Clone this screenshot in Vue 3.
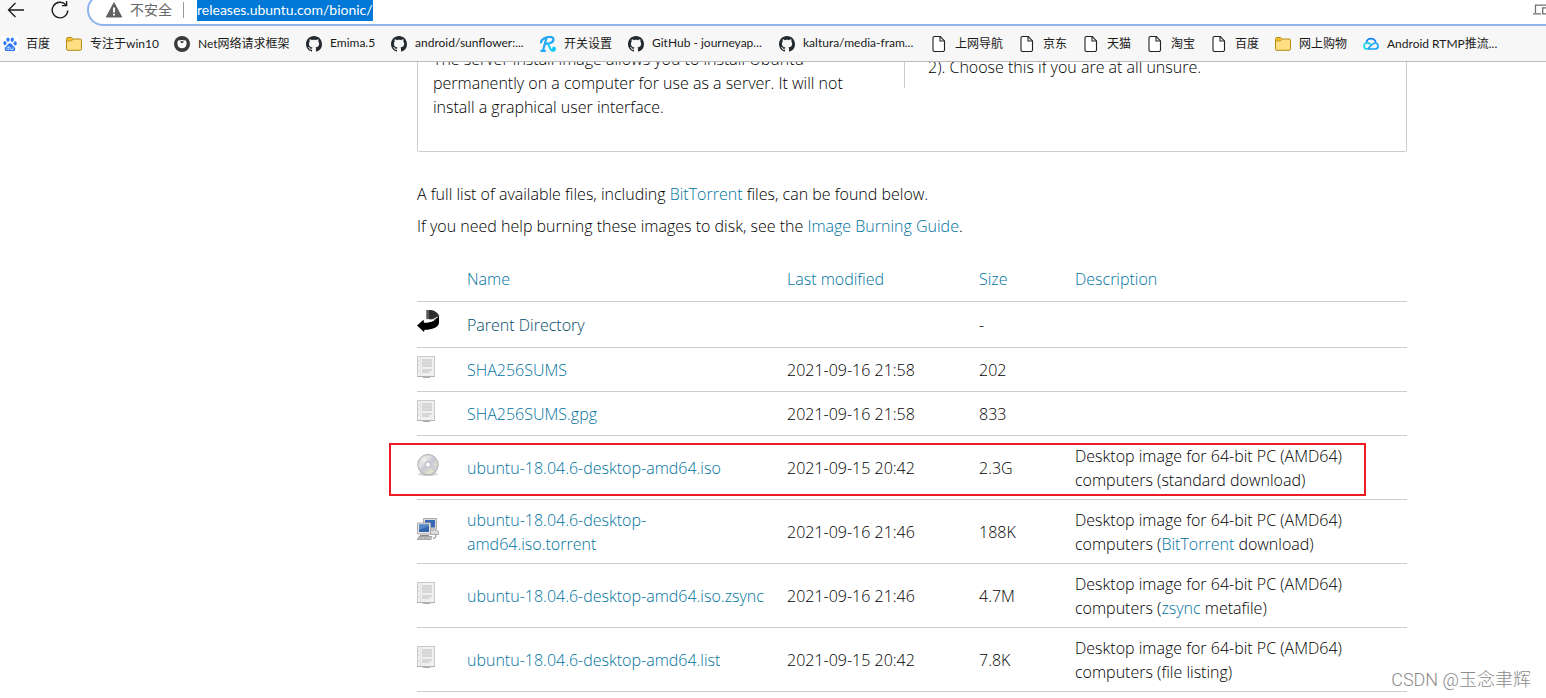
<script setup>
const bookmarks = [
  { icon: 'paw', label: '百度', width: 64 },
  { icon: 'folder', label: '专注于win10', width: 108 },
  { icon: 'face', label: 'Net网络请求框架', width: 132 },
  { icon: 'github', label: 'Emima.5', width: 85 },
  { icon: 'github', label: 'android/sunflower:...', width: 149 },
  { icon: 'letter', label: '开关设置', width: 88 },
  { icon: 'github', label: 'GitHub - journeyap...', width: 151 },
  { icon: 'github', label: 'kaltura/media-fram...', width: 152 },
  { icon: 'page', label: '上网导航', width: 88 },
  { icon: 'page', label: '京东', width: 64 },
  { icon: 'page', label: '天猫', width: 64 },
  { icon: 'page', label: '淘宝', width: 64 },
  { icon: 'page', label: '百度', width: 64 },
  { icon: 'folder', label: '网上购物', width: 88 },
  { icon: 'cloud', label: 'Android RTMP推流...', width: 160 }
]
const columns = bookmarks.map((b) => b.width + 'px').join(' ')

const image = 'Desktop image for 64-bit PC (AMD64) computers'
const files = [
  { icon: 'back', name: 'Parent Directory', date: '', size: '-', visited: true },
  { icon: 'text', name: 'SHA256SUMS', date: '2021-09-16 21:58', size: '202' },
  { icon: 'text', name: 'SHA256SUMS.gpg', date: '2021-09-16 21:58', size: '833' },
  { icon: 'disc', name: 'ubuntu-18.04.6-desktop-amd64.iso', date: '2021-09-15 20:42', size: '2.3G', before: image + ' (standard download)', marked: true },
  { icon: 'computers', name: 'ubuntu-18.04.6-desktop-amd64.iso.torrent', date: '2021-09-16 21:46', size: '188K', before: image + ' (', link: 'BitTorrent', after: ' download)' },
  { icon: 'text', name: 'ubuntu-18.04.6-desktop-amd64.iso.zsync', date: '2021-09-16 21:46', size: '4.7M', before: image + ' (', link: 'zsync', after: ' metafile)' },
  { icon: 'text', name: 'ubuntu-18.04.6-desktop-amd64.list', date: '2021-09-15 20:42', size: '7.8K', before: image + ' (file listing)' }
]
</script>

<template>
  <div class="window">
    <header class="browser">
      <div class="toolbar">
        <button class="tool back" type="button" aria-label="Back">
          <svg width="18" height="18" viewBox="0 0 18 18" fill="none" stroke="#1b1b1b" stroke-width="1.3"><path d="M17 9H1.5M8.500 2 1.500 9l7 7" /></svg>
        </button>
        <button class="tool reload" type="button" aria-label="Reload">
          <svg width="18" height="18" viewBox="0 0 18 18" fill="none" stroke="#1b1b1b" stroke-width="1.4"><path d="M16.800 9.500A7.800 7.800 0 1 1 14.800 3.800M15.600 0v4.600H11" /></svg>
        </button>
        <div class="address">
          <svg width="16" height="16" viewBox="0 0 16 16"><path d="M8 .8 15.700 15H.3Z" fill="#616161" stroke="#616161" stroke-linejoin="round" /><path d="M7 5.500h2v5H7zM7 11.800h2v1.800H7z" fill="#fff" /></svg>
          <span class="insecure">不安全</span>
          <input class="url" type="text" aria-label="Address" value="releases.ubuntu.com/bionic/" />
          <svg class="devices" width="13" height="12" viewBox="0 0 13 12" fill="none" stroke="#707070" stroke-width="1.3"><path d="M2.500 9V1.200H13M0 9.800h8M13 3.800H9.700v6H13" /></svg>
        </div>
      </div>
      <nav class="bookmarks" :style="{ gridTemplateColumns: columns }">
        <a v-for="(b, i) in bookmarks" :key="i" class="bookmark" href="#">
          <svg v-if="b.icon === 'paw'" width="16" height="16" viewBox="0 0 16 16">
            <rect width="16" height="16" fill="#fff" />
            <g fill="#2d78f4"><ellipse cx="2.9" cy="7.2" rx="1.6" ry="2.1" transform="rotate(-12 2.9 7.2)" /><ellipse cx="6" cy="3.6" rx="1.6" ry="2.2" /><ellipse cx="10.2" cy="3.7" rx="1.6" ry="2.2" transform="rotate(10 10.2 3.7)" /><ellipse cx="13.2" cy="7.4" rx="1.6" ry="2.1" /><path d="M8 7.2c1.6 0 2 1.3 3 2.5 1 1.100 2.500 1.700 2.300 3.500-.2 2-2 2.100-3.300 1.900-1.300-.2-2.700-.2-4 0-1.400.2-3.200 0-3.400-1.900-.2-1.800 1.300-2.400 2.300-3.500C6 8.500 6.400 7.200 8 7.200Z" /></g>
            <path d="M7 10v3.600H5.600c-1.300 0-1.300-2.200 0-2.200H7M8.700 11.300v2.300H11v-2.300" fill="none" stroke="#fff" stroke-width=".7" />
          </svg>
          <svg v-else-if="b.icon === 'folder'" width="16" height="16" viewBox="0 0 16 16">
            <path d="M.5 3.200Q.5 1.500 2 1.500h3.500L7.300 3h6.900q1.300 0 1.300 1.500v8.300q0 1.500-1.300 1.500H2q-1.500 0-1.500-1.500Z" fill="#ffdf82" stroke="#b58a14" />
            <path d="M1 4.500V3q0-1 1-1h3.300l1.400 1.300-1.400 1.400H1Z" fill="#f4bd2c" /><path d="M.8 5h4.700L7.300 3" fill="none" stroke="#b58a14" stroke-width=".8" />
          </svg>
          <svg v-else-if="b.icon === 'face'" width="16" height="16" viewBox="0 0 16 16">
            <circle cx="8" cy="8" r="8" fill="#3b3b3d" /><path d="M4 4.600 6.500 4.200Q8 4 9.500 4.200L12 4.600Q13 7 12.400 9 11.300 12.200 8 12.200T3.600 9Q3 7 4 4.600Z" fill="#fff" /><path d="M6.200 5.300h3.600L9 7H7Z" fill="#3b3b3d" />
          </svg>
          <svg v-else-if="b.icon === 'github'" width="16" height="16" viewBox="0 0 16 16">
            <path fill="#24292f" d="M8 0C3.580 0 0 3.580 0 8c0 3.540 2.290 6.530 5.470 7.590.4.070.55-.17.55-.38 0-.19-.01-.82-.01-1.490-2.010.37-2.530-.49-2.690-.94-.09-.23-.48-.94-.82-1.130-.28-.15-.68-.52-.01-.53.63-.01 1.080.58 1.230.82.72 1.210 1.870.87 2.330.66.07-.52.28-.87.51-1.070-1.780-.2-3.640-.89-3.640-3.950 0-.87.31-1.590.82-2.150-.08-.2-.36-1.020.08-2.120 0 0 .67-.21 2.200.82.64-.18 1.320-.27 2-.27s1.360.09 2 .27c1.530-1.040 2.200-.82 2.200-.82.44 1.100.16 1.920.08 2.120.51.56.82 1.270.82 2.150 0 3.070-1.870 3.750-3.650 3.950.29.25.54.73.54 1.480 0 1.070-.01 1.930-.01 2.200 0 .21.15.46.55.38A8.010 8.010 0 0 0 16 8c0-4.420-3.580-8-8-8Z" />
          </svg>
          <svg v-else-if="b.icon === 'letter'" width="16" height="16" viewBox="0 0 16 16" fill="none" stroke-linecap="round">
            <path d="M6.300 2.500 3 14.500M1 6.500C1 3 6 1 10 1c4.500 0 4.500 4.500.5 6-1.500.6-3 .7-4 .7M1.200 14.800H5" stroke="#23a8f5" stroke-width="2.200" /><path d="M8 8c1.500 1.500 2 6.500 4.500 6.800 2 .2 3-1.700 2.200-2.800-.8-.9-2 0-1.500.9" stroke="#12c9fa" stroke-width="2" />
          </svg>
          <svg v-else-if="b.icon === 'page'" width="16" height="16" viewBox="0 0 16 16">
            <path d="M3.500.5h5.800l4.200 4.400v9.100q0 1.500-1.500 1.500H3.500q-1.500 0-1.500-1.500V2Q2 .5 3.500.5Z" fill="#fff" stroke="#222" stroke-width="1.100" /><path d="M9 .7V5h4.300" fill="none" stroke="#222" stroke-width="1.100" />
          </svg>
          <svg v-else width="16" height="16" viewBox="0 0 16 16" fill="none" stroke-width="1.700">
            <path d="M3.300 6.800C3.800 4 5.500 2.700 8 2.700c2.700 0 4.300 1.500 4.800 4" stroke="#1684fc" /><path d="M4.300 13h7.700c4 0 4-6 .2-6-1.400 0-2.200.7-3 1.500L4.500 13" stroke="#17a2fa" /><path d="m8.200 9-1.100-1C5.900 7 5.200 6.800 4.100 6.800c-4 0-4.200 6.200.2 6.200" stroke="#19d4e6" />
          </svg>
          <span>{{ b.label }}</span>
        </a>
      </nav>
    </header>

    <main class="page">
      <section class="info">
        <p class="server">The server install image allows you to install Ubuntu permanently on a computer for use as a server. It will not install a graphical user interface.</p>
        <p class="choose">2). Choose this if you are at all unsure.</p>
      </section>
      <p class="note">A full list of available files, including <a href="#">BitTorrent</a> files, can be found below.</p>
      <p class="note">If you need help burning these images to disk, see the <a href="#">Image Burning Guide</a>.</p>

      <table class="files">
        <colgroup><col class="c-icon" /><col class="c-name" /><col class="c-date" /><col class="c-size" /><col /></colgroup>
        <thead>
          <tr>
            <th></th>
            <th><a href="#">Name</a></th>
            <th><a href="#">Last modified</a></th>
            <th><a href="#">Size</a></th>
            <th><a href="#">Description</a></th>
          </tr>
        </thead>
        <tbody>
          <tr v-for="f in files" :key="f.name" :class="{ marked: f.marked }">
            <td>
              <svg v-if="f.icon === 'back'" class="icon tall" width="22" height="22" viewBox="0 0 22 22">
                <path d="M9 0h5c4 .8 7.500 3 8 6v3C20 10 16 9.200 9 9.200Z" fill="#2e2e2e" /><path d="M9.500 0v9M11 0v9" stroke="#aaa" stroke-width=".7" />
                <path d="M9 9.500 14 10.500 21 7" stroke="#fff" stroke-width="1" fill="none" />
                <path d="M22 5.500v7c0 5-8 7.500-14.500 7.300L7 22 0 15.500l6.500-5.700.5 3C13 13.200 19.500 10.500 22 5.500Z" fill="#000" />
              </svg>
              <svg v-else-if="f.icon === 'text'" class="icon" width="22" height="22" viewBox="0 0 22 22">
                <path d="M5 21h9l-2 1H7Z" fill="#aaa" /><rect x=".5" y=".5" width="17" height="20" fill="#f0f0f0" stroke="#cacaca" /><path d="M0 20.500h18" stroke="#b2b2b2" />
                <path d="M3.500 1v19" stroke="#e2e2e2" /><path d="M1.500 4.500v1M1.500 8.500v1M1.500 14.500v1" stroke="#ccc" />
                <path d="M5 3h10v8H5zM5 13h10v2H5zM5 15h7v2H5z" fill="#d6d6d6" /><path d="M5 5.500h10M5 8.500h10" stroke="#dedede" stroke-width=".7" />
              </svg>
              <svg v-else-if="f.icon === 'disc'" class="icon" width="22" height="22" viewBox="0 0 22 22">
                <defs><linearGradient id="disc-shine" x1="0" y1="0" x2="1" y2="1"><stop offset="0" stop-color="#b5b5b5" /><stop offset=".3" stop-color="#e6e6e6" /><stop offset=".5" stop-color="#c8c8d8" /><stop offset=".75" stop-color="#e5e2cb" /><stop offset="1" stop-color="#b6b6b6" /></linearGradient></defs>
                <ellipse cx="11" cy="20" rx="10" ry="2" fill="#d5d5d5" /><circle cx="11" cy="10.700" r="10.200" fill="url(#disc-shine)" stroke="#a5a5a5" stroke-width=".9" />
                <path d="m11 10.700-8-5A10 10 0 0 1 8 1.500Z" fill="#fff" opacity=".4" /><path d="m11 10.700 9.500 1A10 10 0 0 1 17 18Z" fill="#b9b6e2" opacity=".4" />
                <circle cx="11" cy="10.700" r="3.600" fill="#c5c5cd" /><circle cx="11" cy="10.700" r="1.900" fill="#fff" />
              </svg>
              <svg v-else class="icon" width="22" height="22" viewBox="0 0 22 22">
                <path d="M6.500.5h13v10.500h-13Z" fill="#ddd" stroke="#aaa" /><path d="M8 2h10v7.500H8Z" fill="#3869b4" /><path d="M11 12h8l2.500 1.500v3H13Z" fill="#ddd" stroke="#999" stroke-width=".8" />
                <path d="M.5 5h13v11H.5Z" fill="#e8e8e8" stroke="#aaa" /><path d="M2 6.500h10v7.500H2Z" fill="#3565af" /><path d="m2 12 10-4V6.500H2Z" fill="#5887c8" />
                <path d="M3 17h9v1.500H3Z" fill="#888" /><path d="M2 18.500h13l-1 3H0Z" fill="#cfcfcf" stroke="#999" stroke-width=".8" /><path d="M2 20h11" stroke="#888" stroke-dasharray="1.500 1" /><path d="M16 20.500q3.500 0 3-3.500" stroke="#888" fill="none" />
              </svg>
              <div v-if="f.marked" class="marker"></div>
            </td>
            <td><a href="#" :class="{ visited: f.visited }">{{ f.name }}</a></td>
            <td>{{ f.date }}</td>
            <td>{{ f.size }}</td>
            <td>{{ f.before }}<a v-if="f.link" href="#">{{ f.link }}</a>{{ f.after }}</td>
          </tr>
        </tbody>
      </table>
    </main>
    <div class="watermark">CSDN @玉念聿辉</div>
  </div>
</template>

<style>
body { margin: 0; background: #fff; }
</style>

<style scoped>
.window { position: relative; height: 100vh; overflow: hidden; display: flex; flex-direction: column; }
.browser { flex: none; background: #f7f7f7; border-bottom: 1px solid #b9b9b9; font-family: Lato, "Noto Sans CJK SC", sans-serif; }
.toolbar { height: 26px; overflow: hidden; display: flex; align-items: flex-end; }
.tool { flex: none; height: 32px; padding: 0; border: 0; background: none; display: flex; align-items: center; }
.back { width: 44px; padding-left: 7px; }
.reload { width: 43px; padding-left: 7px; }
.address { flex: 1; box-sizing: border-box; height: 32px; display: flex; align-items: center; padding-left: 17px; background: #fff; border: 2px solid #8fb4ea; border-right: 0; border-radius: 16px 0 0 16px; font-size: 14px; color: #666; }
.insecure { margin-left: 8px; padding-right: 11px; border-right: 1px solid #999; line-height: 16px; }
.url { box-sizing: border-box; width: 176px; height: 22px; margin-left: 13px; padding: 0 0 2px; border: 0; background: #0078d7; color: #fff; font: inherit; }
.devices { margin-left: auto; }
.bookmarks { height: 35px; padding-left: 2px; display: grid; align-items: center; overflow: hidden; }
.bookmark { display: flex; align-items: center; gap: 8px; color: #1a1a1a; text-decoration: none; font-size: 12px; white-space: nowrap; }
.bookmark svg { flex: none; }
.bookmark span { padding-bottom: 2px; }
.page { flex: 1; min-height: 0; overflow: hidden; padding: 0 139px 0 417px; font: 300 16px/24px "Open Sans", sans-serif; color: #000; }
.page p { margin: 0; }
.page a { color: #0073a0; text-decoration: none; }
.page a.visited { color: #004a66; }
.info { display: grid; grid-template-columns: 486px 1fr; align-items: start; margin: -15px 0 30px; padding-bottom: 32px; border: 1px solid #cdcdcd; border-top: 0; border-radius: 0 0 2px 2px; }
.page .server { padding: 0 50px 0 15px; }
.page .choose { padding: 8px 0 9px 23px; border-left: 1px solid #cdcdcd; }
.page .note { margin-bottom: 8px; }
.files { width: 100%; margin-top: 21px; table-layout: fixed; border-collapse: separate; border-spacing: 0; }
.c-icon { width: 50px; }
.c-name { width: 320px; }
.c-date { width: 192px; }
.c-size { width: 96px; }
th { padding: 8px 16px 10px 0; text-align: left; font-weight: 300; border-bottom: 1px solid #cdcdcd; }
td { padding: 8px 16px 7px 0; vertical-align: middle; border-bottom: 1px solid #cdcdcd; }
.icon { display: block; margin-bottom: 6px; }
.icon.tall { margin-bottom: 8px; }
.marked { position: relative; }
.marker { position: absolute; top: 7px; right: 41px; bottom: 4px; left: -28px; border: 2px solid #ed1c24; pointer-events: none; }
.watermark { position: absolute; right: 15px; bottom: 6px; font: 300 18px/24px Roboto, "Noto Sans CJK SC", sans-serif; color: #8c8c8c; }
</style>
